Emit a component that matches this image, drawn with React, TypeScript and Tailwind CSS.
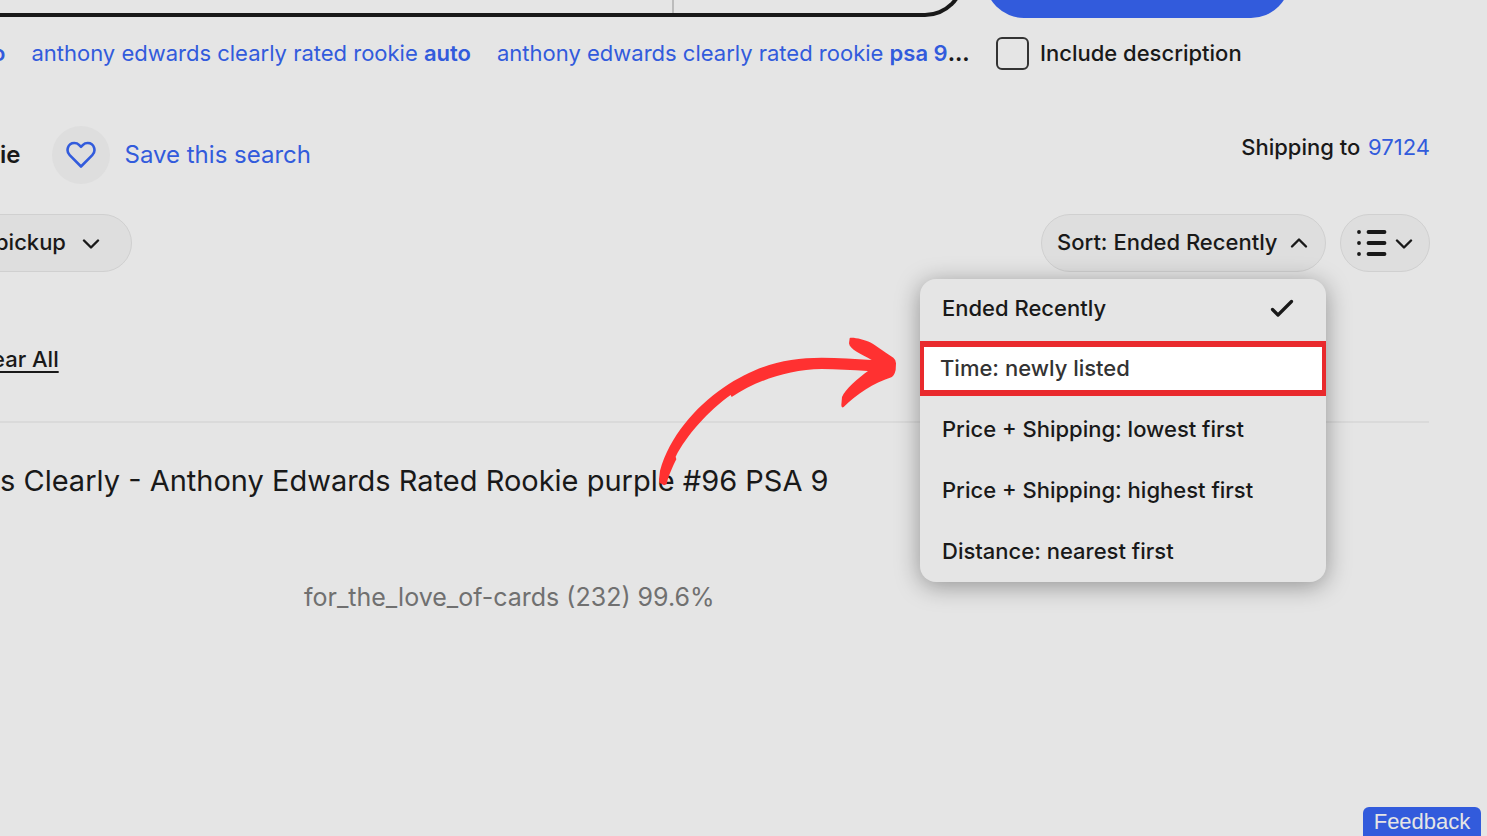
import { useState } from 'react'

const SORT_OPTIONS = [
  'Ended Recently',
  'Time: newly listed',
  'Price + Shipping: lowest first',
  'Price + Shipping: highest first',
  'Distance: nearest first'
]

interface ChevronProps {
  up?: boolean
}

const Chevron = ({ up }: ChevronProps) => (
  <svg width="18" height="12" viewBox="0 0 18 12" fill="none" stroke="currentColor" strokeWidth="2.4" strokeLinecap="round" strokeLinejoin="round" aria-hidden="true">
    <path d={up ? 'M2 9.5 9 2.5l7 7' : 'M2 3.5l7 7 7-7'} />
  </svg>
)

const HeartIcon = () => (
  <svg width="30" height="28" viewBox="0 0 30 28" fill="none" stroke="currentColor" strokeWidth="2.6" strokeLinejoin="round" aria-hidden="true">
    <path d="M15 25.5 3.7 14.2C-.2 10.3 1.4 2 8.3 2c2.500 0 3.700.8 4.700 1.800l2 2 2-2C18 2.800 19.200 2 21.700 2c6.900 0 8.500 8.300 4.600 12.200z" />
  </svg>
)

const ListIcon = () => (
  <svg width="30" height="28" viewBox="0 0 30 28" stroke="currentColor" strokeWidth="3.8" strokeLinecap="round" aria-hidden="true">
    <path d="M2 3h.01M2 14h.01M2 25h.01M11.500 3h16M11.500 14h16M11.500 25h16" />
  </svg>
)

const CheckIcon = () => (
  <svg width="24" height="18" viewBox="0 0 24 18" fill="none" stroke="currentColor" strokeWidth="3.2" strokeLinecap="round" strokeLinejoin="round" aria-hidden="true">
    <path d="M2.500 10.500l5.500 5.500L21.500 2.500" />
  </svg>
)

const PointerArrow = () => (
  <svg className="pointer-events-none absolute top-[41px] right-full" width="280" height="190" viewBox="0 0 840 570" fill="#ff3131" aria-hidden="true">
    <path d="M57 478 L60 452 C88 350 165 262 250 203 C350 135 440 113 545 113 C595 113 645 117 695 120 C665 103 628 88 627 70 L629 55 C633 50 675 59 690 67 C710 78 745 104 760 113 Q768 119 768 130 L767 150 Q763 167 754 172 C700 190 650 222 611 261 Q604 265 604 255 L606 231 C615 208 655 174 684 153 C635 150 590 147 545 147 C445 149 350 181 275 231 L272 225 C205 273 140 345 107 410 L109 418 C98 440 85 468 80 493 L72 496 L58 488 Z" />
  </svg>
)

const SortMenu = () => {
  const [open, setOpen] = useState(true)
  const [selected, setSelected] = useState(SORT_OPTIONS[0])

  return (
    <div className="relative">
      <button
        className="flex h-[58px] w-[285px] items-center justify-between rounded-full border border-[#d0d0d0] bg-[#dedede] pr-[17px] pl-[15px]"
        aria-expanded={open}
        onClick={() => setOpen(!open)}
      >
        <span className="pb-0.5 whitespace-nowrap">Sort: {selected}</span>
        <Chevron up={open} />
      </button>
      {open && (
        <div className="absolute top-[65px] right-0 z-10 h-[303px] w-[406px] rounded-2xl bg-[#e5e5e5] shadow-[0_4px_24px_rgba(0,0,0,0.36)]">
          <ul className="grid h-full grid-rows-5">
            {SORT_OPTIONS.map((option) => (
              <li key={option}>
                <button
                  className={
                    option === 'Time: newly listed'
                      ? 'mt-px flex h-[55px] w-full items-center border-x-4 border-y-6 border-[#e92a2d] bg-white px-4 text-[#333]'
                      : 'flex h-full w-full items-center justify-between pr-8 pb-0.5 pl-[22px]'
                  }
                  onClick={() => setSelected(option)}
                >
                  {option}
                  {option === selected && <CheckIcon />}
                </button>
              </li>
            ))}
          </ul>
          <PointerArrow />
        </div>
      )}
    </div>
  )
}

export default function App() {
  return (
    <div className="relative min-h-screen overflow-hidden bg-[#e5e5e5] font-['Inter',sans-serif] text-[22px] leading-7 font-medium text-[#191919]">
      {/* search bar, scrolled mostly out of view */}
      <header className="flex h-[18px] items-end gap-5 overflow-hidden">
        <form className="mb-px flex h-20 min-w-0 flex-1 rounded-r-full border-y-4 border-r-4 border-[#191919]">
          <input type="text" aria-label="Search" className="min-w-0 flex-1 outline-none" />
          <div className="w-[289px] border-l-2 border-[#bcbcbc]" />
        </form>
        <div className="w-[502px] shrink-0">
          <button aria-label="Search" className="block h-[78px] w-[305px] rounded-full bg-[#325bdc]" />
        </div>
      </header>

      <div className="flex h-[70px] items-center">
        <nav className="-ml-2 flex min-w-0 flex-1 gap-[26px] whitespace-nowrap text-[#325bdc]">
          <a href="#" className="font-semibold">o</a>
          <a href="#" className="font-normal">anthony edwards clearly rated rookie <b className="font-semibold">auto</b></a>
          <span className="font-bold text-[#191919]">
            <a href="#" className="font-normal text-[#325bdc]">anthony edwards clearly rated rookie <b className="font-semibold">psa 9</b></a>...
          </span>
        </nav>
        <label className="flex w-[491px] shrink-0 items-center gap-[11px]">
          <input type="checkbox" className="size-[33px] appearance-none rounded-md border-2 border-[#333]" />
          Include description
        </label>
      </div>

      <div className="mt-[38px] flex h-[58px] items-center pr-[57px]">
        <h1 className="text-2xl font-semibold">ie</h1>
        <button className="ml-8 flex items-center gap-3.5 text-2xl font-normal text-[#325bdc]">
          <span className="flex size-[58px] items-center justify-center rounded-full bg-[#dedede]">
            <HeartIcon />
          </span>
          Save this search
        </button>
        <p className="mb-4 ml-auto">
          Shipping to <a href="#" className="ml-0.5 font-normal text-[#325bdc]">97124</a>
        </p>
      </div>

      <div className="mt-[30px] flex justify-between pr-[57px]">
        <button className="-ml-2 flex h-[58px] items-center gap-4 rounded-r-full border border-[#d0d0d0] bg-[#dedede] pr-[31px] pl-0.5">
          <span className="pb-0.5">pickup</span>
          <Chevron />
        </button>
        <div className="flex gap-3.5">
          <SortMenu />
          <button aria-label="View" className="flex h-[58px] w-[90px] items-center justify-center gap-2 rounded-full border border-[#d0d0d0] bg-[#dedede]">
            <ListIcon />
            <Chevron />
          </button>
        </div>
      </div>

      <div className="mr-[58px] flex h-[151px] items-center border-b-2 border-[#dadada] pt-6">
        <a href="#" className="-ml-2 underline underline-offset-4">ear All</a>
      </div>

      <main className="pt-10">
        <h2 className="text-[29px] leading-9 font-normal whitespace-nowrap">
          s Clearly - Anthony Edwards Rated Rookie purple #96 PSA 9
        </h2>
        <p className="mt-[84px] pl-[304px] text-[25px] font-normal text-[#707070]">for_the_love_of-cards (232) 99.6%</p>
      </main>

      <button className="absolute right-1.5 bottom-0 h-[29px] w-[118px] rounded-t-md bg-[#325bdc] font-['Liberation_Sans',sans-serif] font-normal text-[#e5e5e5]">
        Feedback
      </button>
    </div>
  )
}
